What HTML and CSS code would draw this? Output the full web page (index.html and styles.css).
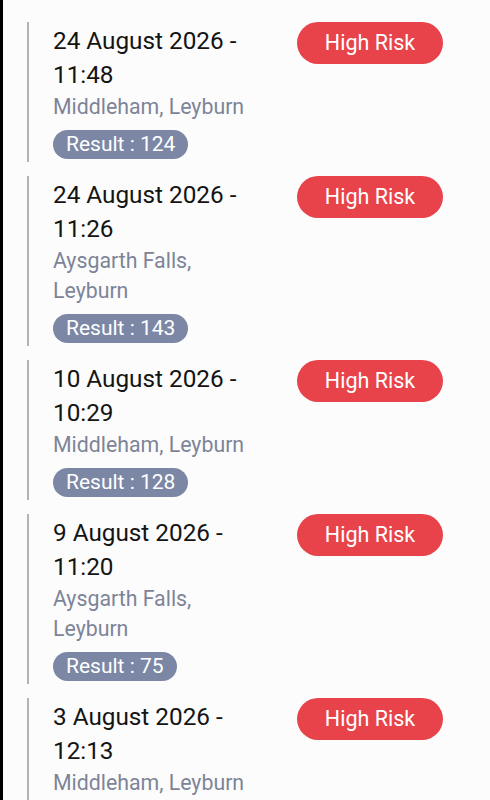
FILE: index.html
```html
<!DOCTYPE html>
<html lang="en">
<head>
<meta charset="utf-8">
<title>Results</title>
<link rel="stylesheet" href="styles.css">
</head>
<body>
<div class="page">
  <div class="item">
    <div class="info">
      <div class="date">24 August 2026 - 11:48</div>
      <div class="place">Middleham, Leyburn</div>
      <span class="result">Result : 124</span>
    </div>
    <span class="risk">High Risk</span>
  </div>
  <div class="item">
    <div class="info">
      <div class="date">24 August 2026 - 11:26</div>
      <div class="place">Aysgarth Falls, Leyburn</div>
      <span class="result">Result : 143</span>
    </div>
    <span class="risk">High Risk</span>
  </div>
  <div class="item">
    <div class="info">
      <div class="date">10 August 2026 - 10:29</div>
      <div class="place">Middleham, Leyburn</div>
      <span class="result">Result : 128</span>
    </div>
    <span class="risk">High Risk</span>
  </div>
  <div class="item">
    <div class="info">
      <div class="date">9 August 2026 - 11:20</div>
      <div class="place">Aysgarth Falls, Leyburn</div>
      <span class="result">Result : 75</span>
    </div>
    <span class="risk">High Risk</span>
  </div>
  <div class="item">
    <div class="info">
      <div class="date">3 August 2026 - 12:13</div>
      <div class="place">Middleham, Leyburn</div>
      <span class="result">Result : 124</span>
    </div>
    <span class="risk">High Risk</span>
  </div>
</div>
</body>
</html>
```
FILE: styles.css
```css
html, body {
  margin: 0;
  padding: 0;
  background: #fcfcfc;
  font-family: Roboto, "Noto Sans", sans-serif;
}
.page {
  border-left: 3px solid #000;
  height: 800px;
  box-sizing: border-box;
  padding: 22px 47px 0 24px;
  overflow: hidden;
}
.item {
  display: flex;
  justify-content: space-between;
  align-items: flex-start;
  border-left: 2px solid #b4b4b4;
  padding-left: 24px;
  margin-bottom: 14px;
}
.info {
  width: 200px;
  padding: 2px 0 3px;
  display: flex;
  flex-direction: column;
  align-items: flex-start;
}
.date {
  font-size: 24.3px;
  line-height: 34px;
  color: #141414;
}
.place {
  font-size: 21.3px;
  line-height: 30px;
  color: #7d8498;
}
.result {
  margin-top: 8px;
  height: 29px;
  line-height: 29px;
  padding: 0 13px;
  border-radius: 15px;
  background: #7b87a5;
  color: #fff;
  font-size: 21px;
}
.risk {
  width: 146px;
  height: 42px;
  line-height: 42px;
  text-align: center;
  border-radius: 21px;
  background: #e8434b;
  color: #fff;
  font-size: 21.5px;
}
```
